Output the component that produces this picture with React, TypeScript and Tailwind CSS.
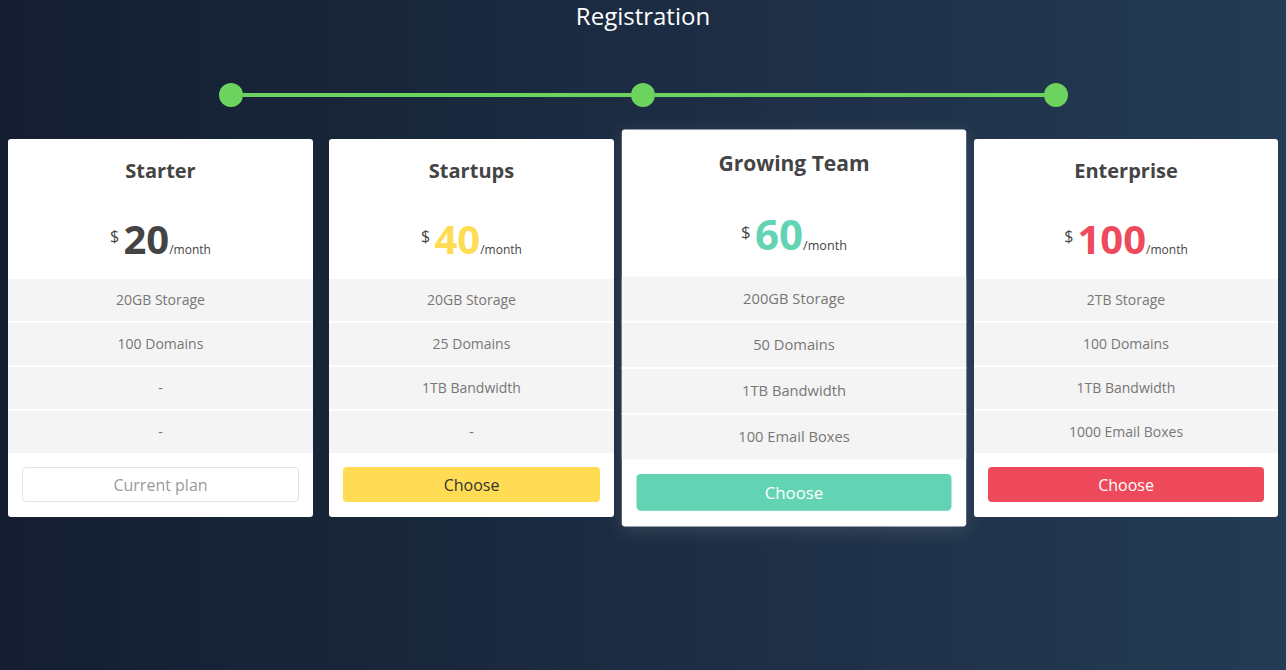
import React from "react";

type Plan = {
  name: string;
  price: string;
  priceColor: string;
  width: string;
  features: string[];
  button: string;
  buttonClass: string;
  featured?: boolean;
};

const plans: Plan[] = [
  {
    name: "Starter",
    price: "20",
    priceColor: "text-[#444444]",
    width: "w-[305px]",
    features: ["20GB Storage", "100 Domains", "-", "-"],
    button: "Current plan",
    buttonClass: "border border-[#e3e3e3] bg-white text-[#9a9a9a]",
  },
  {
    name: "Startups",
    price: "40",
    priceColor: "text-[#ffdc54]",
    width: "w-[285px]",
    features: ["20GB Storage", "25 Domains", "1TB Bandwidth", "-"],
    button: "Choose",
    buttonClass: "bg-[#ffdc54] text-[#333333]",
  },
  {
    name: "Growing Team",
    price: "60",
    priceColor: "text-[#62d4b4]",
    width: "w-[328px]",
    features: ["200GB Storage", "50 Domains", "1TB Bandwidth", "100 Email Boxes"],
    button: "Choose",
    buttonClass: "bg-[#62d4b4] text-white",
    featured: true,
  },
  {
    name: "Enterprise",
    price: "100",
    priceColor: "text-[#ee4a5b]",
    width: "w-[304px]",
    features: ["2TB Storage", "100 Domains", "1TB Bandwidth", "1000 Email Boxes"],
    button: "Choose",
    buttonClass: "bg-[#ee4a5b] text-white",
  },
];

function Dot() {
  return <div className="h-6 w-6 shrink-0 rounded-full bg-[#6dd35f]" />;
}

function PlanCard({ plan }: { plan: Plan }) {
  return (
    <div
      className={`${plan.width} shrink-0 rounded-[3px] bg-white ${
        plan.featured ? "relative z-10 scale-105 shadow-[0_4px_18px_rgba(255,255,255,0.12)]" : ""
      }`}
    >
      <div className="flex h-[140px] flex-col items-center pt-[18px]">
        <h3 className="text-[20px] leading-7 font-bold text-[#444444]">{plan.name}</h3>
        <div className="mt-[34px] leading-none text-[#444444]">
          <span className="align-[12px] text-[16px]">$</span>{" "}
          <span className={`text-[40px] font-bold ${plan.priceColor}`}>{plan.price}</span>
          <span className="text-[12px]">/month</span>
        </div>
      </div>
      <ul>
        {plan.features.map((feature, i) => (
          <li
            key={i}
            className="flex h-[44px] items-center justify-center border-b-2 border-white bg-[#f4f4f4] pb-[2px] text-[14px] text-[#777777] last:h-[42px] last:border-b-0"
          >
            {feature}
          </li>
        ))}
      </ul>
      <div className="px-[14px] pt-[14px] pb-[15px]">
        <button className={`h-[35px] w-full rounded-[4px] text-[16px] ${plan.buttonClass}`}>{plan.button}</button>
      </div>
    </div>
  );
}

export default function App() {
  return (
    <div className="min-h-screen bg-gradient-to-r from-[#141e30] to-[#243b55] font-['Open_Sans',sans-serif]">
      <h1 className="text-center text-2xl leading-8 font-normal text-white">Registration</h1>
      <div className="mx-auto mt-[51px] flex w-[849px] items-center">
        <Dot />
        <div className="h-1 flex-1 bg-[#6dd35f]" />
        <Dot />
        <div className="h-1 flex-1 bg-[#6dd35f]" />
        <Dot />
      </div>
      <div className="mt-[32px] flex items-start gap-4 px-2">
        {plans.map((plan) => (
          <PlanCard key={plan.name} plan={plan} />
        ))}
      </div>
    </div>
  );
}
